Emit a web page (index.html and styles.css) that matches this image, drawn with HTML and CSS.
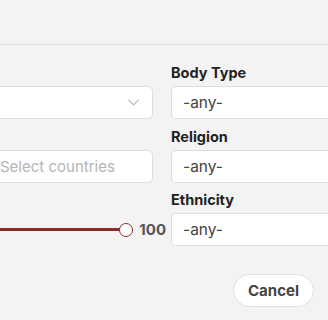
FILE: index.html
```html
<!DOCTYPE html>
<html lang="en">
<head>
  <meta charset="UTF-8" />
  <meta name="viewport" content="width=device-width, initial-scale=1.0" />
  <title>Search filters</title>
  <link rel="stylesheet" href="styles.css">
</head>
<body>
  <div class="modal">
    <div class="modal-head"></div>

    <form class="filters">
      <!-- left column, mostly outside the visible area -->
      <div class="col col-left">
        <div class="field">
          <label>Gender</label>
          <div class="input select">
            <span></span>
            <svg class="chev" width="11" height="7" viewBox="0 0 11 7"><path d="M0.5 0.8 L5.5 5.8 L10.5 0.8" fill="none" stroke="#b3b3b3" stroke-width="1.1"/></svg>
          </div>
        </div>
        <div class="field">
          <label>Country</label>
          <div class="input placeholder">Select countries</div>
        </div>
        <div class="field">
          <label>Age</label>
          <div class="range">
            <div class="track"></div>
            <div class="knob"></div>
            <span class="range-val">100</span>
          </div>
        </div>
      </div>

      <!-- right column -->
      <div class="col col-right">
        <div class="field">
          <label>Body Type</label>
          <div class="input">-any-</div>
        </div>
        <div class="field">
          <label>Religion</label>
          <div class="input">-any-</div>
        </div>
        <div class="field">
          <label>Ethnicity</label>
          <div class="input">-any-</div>
        </div>
      </div>
    </form>

    <div class="actions">
      <button type="button" class="btn">Cancel</button>
    </div>
  </div>
</body>
</html>
```
FILE: styles.css
```css
body {
  margin: 0;
  background-color: #f3f3f3;
  font-family: Inter, "Liberation Sans", sans-serif;
  color: #333;
  overflow: hidden;
}

.modal {
  width: 328px;
  height: 320px;
}

.modal-head {
  height: 44px;
  border-bottom: 1px solid #e2e2e2;
}

.filters {
  display: grid;
  grid-template-columns: 313px 300px;
  column-gap: 18px;
  margin-left: -160px;
  padding-top: 19px;
}

.field {
  margin-bottom: 8.5px;
}

label {
  display: block;
  font-size: 14.5px;
  font-weight: 700;
  line-height: 18px;
  color: #222;
  margin-bottom: 4px;
}

.col-left label {
  visibility: hidden;
}

.input {
  box-sizing: border-box;
  height: 33px;
  background: #fff;
  border: 1px solid #dedede;
  border-radius: 5px;
  padding: 0 11px;
  font-size: 15.5px;
  line-height: 31px;
  color: #444;
}

.select {
  display: flex;
  justify-content: space-between;
  align-items: center;
  padding-right: 13px;
}

.placeholder {
  color: #b5b5b5;
  padding-left: 159px;
  font-size: 15px;
}

.range {
  display: flex;
  align-items: center;
  height: 33px;
  margin-right: -13px;
}

.track {
  flex: 1;
  height: 3px;
  background: #8a2a2a;
}

.knob {
  box-sizing: border-box;
  width: 14px;
  height: 14px;
  border-radius: 50%;
  border: 1.5px solid #8a2a2a;
  background: #fff;
  margin-left: -1px;
}

.range-val {
  margin-left: 6px;
  font-size: 15px;
  font-weight: 700;
  color: #555;
}

.actions {
  display: flex;
  justify-content: flex-end;
  padding: 19.5px 14px 0 0;
}

.btn {
  width: 81px;
  height: 33px;
  border: 1px solid #e0e0e0;
  border-radius: 17px;
  background: #fff;
  font-family: inherit;
  font-size: 15px;
  font-weight: 700;
  color: #444;
}
```
